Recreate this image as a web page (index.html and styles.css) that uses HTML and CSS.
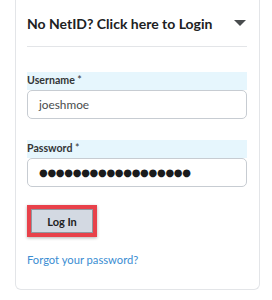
FILE: index.html
```html
<!DOCTYPE html>
<html>
<head>
<meta charset="utf-8">
<link rel="stylesheet" href="styles.css">
</head>
<body>
<div class="card">
  <div class="head">
    <span class="title">No NetID? Click here to Login</span>
    <svg class="caret" width="12" height="6" viewBox="0 0 12 6"><path d="M0 0 H12 L6 6 Z" fill="#494c4e"/></svg>
  </div>
  <div class="field first">
    <div class="label">Username <span class="req">*</span></div>
    <div class="input">joeshmoe</div>
  </div>
  <div class="field second">
    <div class="label">Password <span class="req">*</span></div>
    <div class="input dots">●●●●●●●●●●●●●●●●●●</div>
  </div>
  <div class="btnwrap"><button class="btn">Log In</button></div>
  <a class="link" href="#">Forgot your password?</a>
</div>
</body>
</html>
```

FILE: styles.css
```css
html, body {
  margin: 0;
  padding: 0;
  background: #ffffff;
}
body {
  font-family: Lato, "Noto Sans", sans-serif;
  color: #202122;
}
.card {
  box-sizing: border-box;
  margin-left: 15px;
  width: 245px;
  height: 290px;
  border: 1px solid #e3e5e8;
  border-top: none;
  border-radius: 0 0 6px 6px;
  padding: 0 12px 0 11px;
  display: flex;
  flex-direction: column;
  align-items: stretch;
}
.head {
  height: 46px;
  display: flex;
  align-items: center;
  justify-content: space-between;
  border-bottom: 1px solid #e3e5e8;
  padding-right: 1px;
}
.title {
  font-size: 14px;
  font-weight: 700;
  color: #202122;
}
.caret {
  display: block;
}
.field.first {
  margin-top: 25px;
}
.field.second {
  margin-top: 21px;
}
.label {
  background: #e6f6fd;
  font-size: 10.6px;
  font-weight: 700;
  line-height: 13px;
  padding: 2px 0 3px;
  color: #333536;
}
.req {
  font-weight: 400;
}
.input {
  box-sizing: border-box;
  height: 29px;
  border: 1px solid #c7ccd2;
  border-radius: 5px;
  padding: 0 11px;
  font-size: 11.8px;
  line-height: 27px;
  color: #494c4e;
  background: #fff;
}
.input.dots {
  font-family: "DejaVu Sans", sans-serif;
  font-size: 10px;
  letter-spacing: -0.3px;
  color: #1a1b1c;
}
.btnwrap {
  margin-top: 18px;
  align-self: flex-start;
  border: 4px solid #e8414a;
  box-shadow: 0 1px 3px rgba(0,0,0,0.3);
  display: flex;
}
.btn {
  box-sizing: border-box;
  width: 62px;
  height: 24px;
  margin: 0;
  background: #d3d9e2;
  border: 1px solid #8f979f;
  border-radius: 0;
  font-family: Lato, "Noto Sans", sans-serif;
  font-size: 11px;
  font-weight: 700;
  color: #202122;
  padding: 0;
}
.link {
  margin-top: 15px;
  font-size: 11.2px;
  line-height: 16px;
  color: #3a8dd2;
  text-decoration: none;
  align-self: flex-start;
}
```
